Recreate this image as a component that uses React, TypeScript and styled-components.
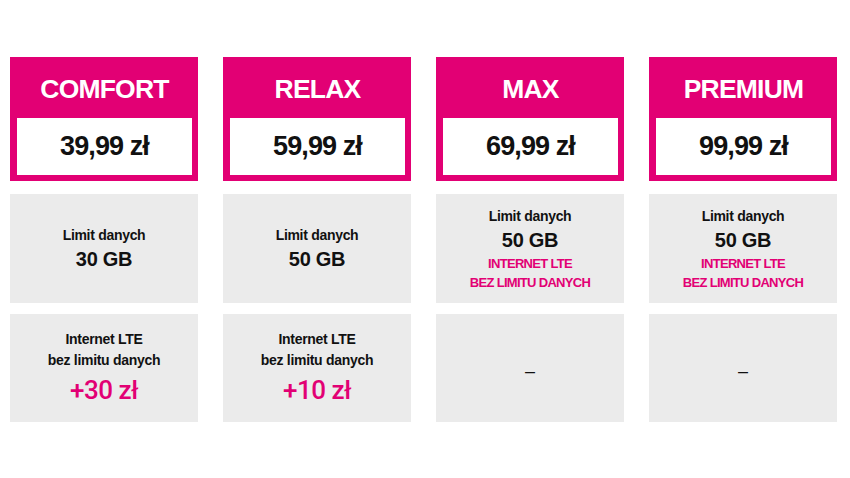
import React from "react";
import styled, { createGlobalStyle } from "styled-components";

const GlobalStyle = createGlobalStyle`
  html, body {
    margin: 0;
    padding: 0;
    background: #ffffff;
  }
  body {
    font-family: "Liberation Sans", Arial, sans-serif;
    color: #111111;
  }
`;

const MAGENTA = "#e20074";

const Page = styled.div`
  width: 850px;
  height: 478px;
  box-sizing: border-box;
  padding: 57px 13px 0 10px;
  display: grid;
  grid-template-columns: repeat(4, 188px);
  column-gap: 25px;
`;

const Column = styled.div`
  display: flex;
  flex-direction: column;
`;

const Header = styled.div`
  background: ${MAGENTA};
  height: 124px;
  box-sizing: border-box;
  padding: 0 6px 6px 7px;
  display: flex;
  flex-direction: column;
`;

const PlanName = styled.div`
  height: 61px;
  display: flex;
  align-items: center;
  justify-content: center;
  color: #ffffff;
  font-weight: bold;
  font-size: 26.5px;
  letter-spacing: -0.8px;
  padding-top: 3px;
  box-sizing: border-box;
`;

const PriceBox = styled.div`
  flex: 1;
  background: #ffffff;
  display: flex;
  align-items: center;
  justify-content: center;
  font-weight: bold;
  font-size: 27px;
  letter-spacing: -0.9px;
  color: #111111;
`;

const Cell = styled.div<{ $top: number; $h: number }>`
  margin-top: ${(p) => p.$top}px;
  height: ${(p) => p.$h}px;
  background: #ebebeb;
  display: flex;
  flex-direction: column;
  align-items: center;
  justify-content: center;
  text-align: center;
`;

const Label = styled.div`
  font-weight: bold;
  font-size: 14px;
  line-height: 21px;
  letter-spacing: -0.3px;
`;

const Amount = styled.div`
  font-weight: bold;
  font-size: 20px;
  line-height: 26px;
  letter-spacing: -0.3px;
`;

const Promo = styled.div`
  color: ${MAGENTA};
  font-weight: bold;
  font-size: 13px;
  line-height: 19px;
  letter-spacing: -0.7px;
`;

const Extra = styled.div`
  color: ${MAGENTA};
  font-family: Roboto, "Liberation Sans", sans-serif;
  font-weight: 500;
  font-size: 26px;
  line-height: 34px;
  letter-spacing: -0.5px;
  margin-top: 2px;
`;

const Dash = styled.div`
  font-size: 18px;
  margin-top: 6px;
`;

type Plan = {
  name: string;
  price: string;
  limit: string;
  unlimited: boolean;
  lteExtra?: string;
};

const plans: Plan[] = [
  { name: "COMFORT", price: "39,99 zł", limit: "30 GB", unlimited: false, lteExtra: "+30 zł" },
  { name: "RELAX", price: "59,99 zł", limit: "50 GB", unlimited: false, lteExtra: "+10 zł" },
  { name: "MAX", price: "69,99 zł", limit: "50 GB", unlimited: true },
  { name: "PREMIUM", price: "99,99 zł", limit: "50 GB", unlimited: true },
];

export default function App() {
  return (
    <>
      <GlobalStyle />
      <Page>
        {plans.map((plan) => (
          <Column key={plan.name}>
            <Header>
              <PlanName>{plan.name}</PlanName>
              <PriceBox>{plan.price}</PriceBox>
            </Header>
            <Cell $top={13} $h={109}>
              <Label>Limit danych</Label>
              <Amount>{plan.limit}</Amount>
              {plan.unlimited && (
                <>
                  <Promo style={{ marginTop: 1 }}>INTERNET LTE</Promo>
                  <Promo>BEZ LIMITU DANYCH</Promo>
                </>
              )}
            </Cell>
            <Cell $top={11} $h={108}>
              {plan.lteExtra ? (
                <>
                  <Label>Internet LTE</Label>
                  <Label>bez limitu danych</Label>
                  <Extra>{plan.lteExtra}</Extra>
                </>
              ) : (
                <Dash>–</Dash>
              )}
            </Cell>
          </Column>
        ))}
      </Page>
    </>
  );
}
